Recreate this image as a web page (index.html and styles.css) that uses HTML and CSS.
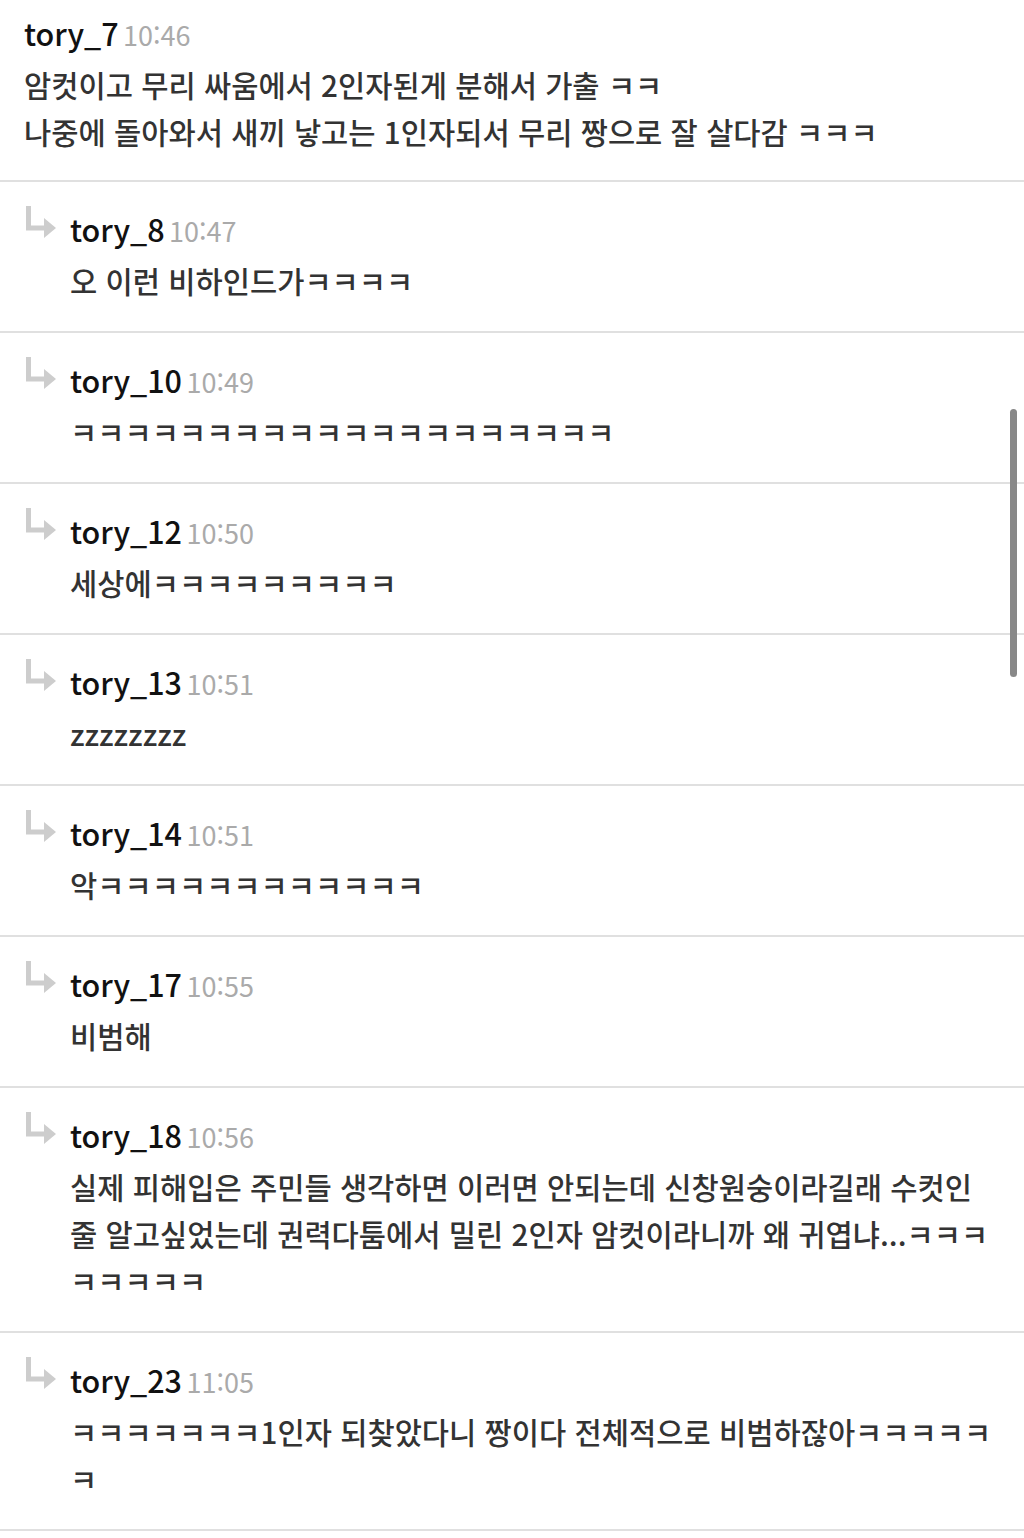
FILE: index.html
```html
<!DOCTYPE html>
<html lang="ko">
  <head>
    <meta charset="UTF-8" />
    <meta name="viewport" content="width=device-width, initial-scale=1.0" />
    <title>Comments</title>
    <link rel="stylesheet" href="styles.css">
  </head>
  <body>
    <div class="comments">
      <div class="comment">
        <div class="head"><span class="name">tory_7</span> <span class="time">10:46</span></div>
        <p class="text">암컷이고 무리 싸움에서 2인자된게 분해서 가출 ㅋㅋ<br />나중에 돌아와서 새끼 낳고는 1인자되서 무리 짱으로 잘 살다감 ㅋㅋㅋ</p>
      </div>

      <div class="comment reply">
        <svg class="arrow" viewBox="0 0 30 34"><path d="M2.5 1 V23 H20" /><path class="tip" d="M18 13 L30 23 L18 33 Z" /></svg>
        <div class="body">
          <div class="head"><span class="name">tory_8</span> <span class="time">10:47</span></div>
          <p class="text">오 이런 비하인드가ㅋㅋㅋㅋ</p>
        </div>
      </div>

      <div class="comment reply">
        <svg class="arrow" viewBox="0 0 30 34"><path d="M2.5 1 V23 H20" /><path class="tip" d="M18 13 L30 23 L18 33 Z" /></svg>
        <div class="body">
          <div class="head"><span class="name">tory_10</span> <span class="time">10:49</span></div>
          <p class="text">ㅋㅋㅋㅋㅋㅋㅋㅋㅋㅋㅋㅋㅋㅋㅋㅋㅋㅋㅋㅋ</p>
        </div>
      </div>

      <div class="comment reply">
        <svg class="arrow" viewBox="0 0 30 34"><path d="M2.5 1 V23 H20" /><path class="tip" d="M18 13 L30 23 L18 33 Z" /></svg>
        <div class="body">
          <div class="head"><span class="name">tory_12</span> <span class="time">10:50</span></div>
          <p class="text">세상에ㅋㅋㅋㅋㅋㅋㅋㅋㅋ</p>
        </div>
      </div>

      <div class="comment reply">
        <svg class="arrow" viewBox="0 0 30 34"><path d="M2.5 1 V23 H20" /><path class="tip" d="M18 13 L30 23 L18 33 Z" /></svg>
        <div class="body">
          <div class="head"><span class="name">tory_13</span> <span class="time">10:51</span></div>
          <p class="text">zzzzzzzz</p>
        </div>
      </div>

      <div class="comment reply">
        <svg class="arrow" viewBox="0 0 30 34"><path d="M2.5 1 V23 H20" /><path class="tip" d="M18 13 L30 23 L18 33 Z" /></svg>
        <div class="body">
          <div class="head"><span class="name">tory_14</span> <span class="time">10:51</span></div>
          <p class="text">악ㅋㅋㅋㅋㅋㅋㅋㅋㅋㅋㅋㅋ</p>
        </div>
      </div>

      <div class="comment reply">
        <svg class="arrow" viewBox="0 0 30 34"><path d="M2.5 1 V23 H20" /><path class="tip" d="M18 13 L30 23 L18 33 Z" /></svg>
        <div class="body">
          <div class="head"><span class="name">tory_17</span> <span class="time">10:55</span></div>
          <p class="text">비범해</p>
        </div>
      </div>

      <div class="comment reply">
        <svg class="arrow" viewBox="0 0 30 34"><path d="M2.5 1 V23 H20" /><path class="tip" d="M18 13 L30 23 L18 33 Z" /></svg>
        <div class="body">
          <div class="head"><span class="name">tory_18</span> <span class="time">10:56</span></div>
          <p class="text">실제 피해입은 주민들 생각하면 이러면 안되는데 신창원숭이라길래 수컷인<br />줄 알고싶었는데 권력다툼에서 밀린 2인자 암컷이라니까 왜 귀엽냐...ㅋㅋㅋ<br />ㅋㅋㅋㅋㅋ</p>
        </div>
      </div>

      <div class="comment reply">
        <svg class="arrow" viewBox="0 0 30 34"><path d="M2.5 1 V23 H20" /><path class="tip" d="M18 13 L30 23 L18 33 Z" /></svg>
        <div class="body">
          <div class="head"><span class="name">tory_23</span> <span class="time">11:05</span></div>
          <p class="text">ㅋㅋㅋㅋㅋㅋㅋ1인자 되찾았다니 짱이다 전체적으로 비범하잖아ㅋㅋㅋㅋㅋ<br />ㅋ</p>
        </div>
      </div>
    </div>

    <div class="scrollbar"></div>
  </body>
</html>
```

FILE: styles.css
```css
body {
  margin: 0;
  background: #fff;
  font-family: "Noto Sans CJK KR", "Noto Sans", sans-serif;
  color: #333;
}

.comment {
  padding: 10px 24px 25px;
  border-bottom: 2px solid #e0e0e0;
}

.reply {
  display: flex;
  gap: 14px;
  padding: 24px 24px 27px 26px;
}

.arrow {
  width: 30px;
  height: 34px;
  flex-shrink: 0;
  margin-top: -1px;
}

.arrow path {
  fill: none;
  stroke: #cdcdcd;
  stroke-width: 5;
}

.arrow .tip {
  fill: #cdcdcd;
  stroke: none;
}

.body {
  flex: 1;
}

.head {
  height: 46px;
  line-height: 46px;
  white-space: nowrap;
}

.name {
  font-size: 30.5px;
  font-weight: 500;
  color: #111;
}

.time {
  font-size: 27px;
  color: #aaa;
}

.text {
  margin: 5px 0 0;
  font-size: 29.6px;
  font-weight: 500;
  line-height: 47px;
  color: #333;
  white-space: nowrap;
}

.scrollbar {
  position: absolute;
  top: 409px;
  left: 1010px;
  width: 7px;
  height: 268px;
  border-radius: 4px;
  background: #888;
}
```
